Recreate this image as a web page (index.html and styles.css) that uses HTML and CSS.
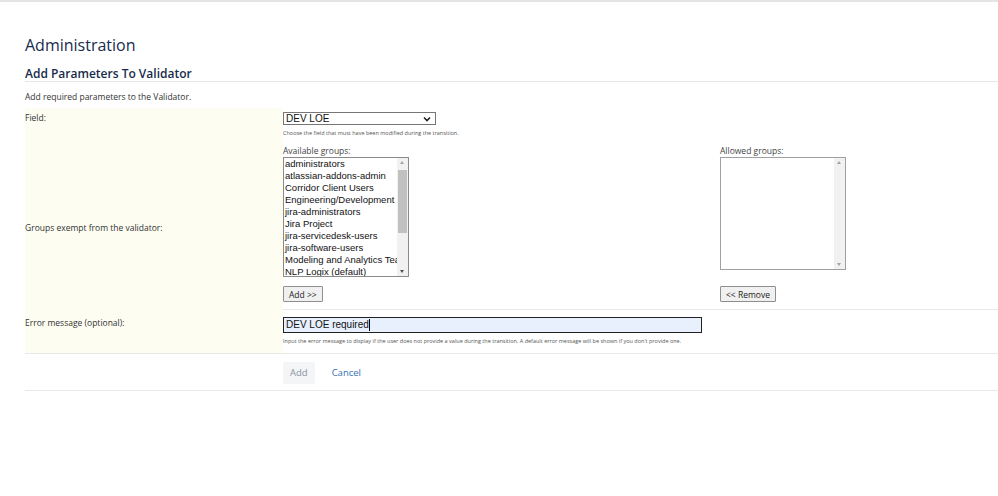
FILE: index.html
```html
<!DOCTYPE html>
<html lang="en">
<head>
  <meta charset="UTF-8" />
  <title>Add Parameters To Validator</title>
  <link rel="stylesheet" href="styles.css">
</head>
<body>
  <div class="topline"></div>

  <div class="page">
    <h1>Administration</h1>
    <h2>Add Parameters To Validator</h2>
    <p class="intro">Add required parameters to the Validator.</p>

    <table class="form">
      <colgroup>
        <col class="col-label">
        <col>
      </colgroup>
      <tr class="row-field">
        <td class="label">Field:</td>
        <td class="value">
          <div class="select">
            <span>DEV LOE</span>
            <svg class="chev" width="8" height="6" viewBox="0 0 8 6"><path d="M1 1.5 L4 4.5 L7 1.5" fill="none" stroke="#222" stroke-width="1.6"/></svg>
          </div>
          <div class="hint">Choose the field that must have been modified during the transition.</div>
        </td>
      </tr>
      <tr class="row-groups">
        <td class="label">Groups exempt from the validator:</td>
        <td class="value">
          <div class="groups">
            <div class="group-col">
              <div class="group-title">Available groups:</div>
              <div class="listbox available">
                <ul class="options">
                  <li>administrators</li>
                  <li>atlassian-addons-admin</li>
                  <li>Corridor Client Users</li>
                  <li>Engineering/Development Group</li>
                  <li>jira-administrators</li>
                  <li>Jira Project</li>
                  <li>jira-servicedesk-users</li>
                  <li>jira-software-users</li>
                  <li>Modeling and Analytics Team</li>
                  <li>NLP Logix (default)</li>
                </ul>
                <div class="scrollbar">
                  <span class="arrow up"></span>
                  <div class="track"><div class="thumb"></div></div>
                  <span class="arrow down"></span>
                </div>
              </div>
              <button class="btn">Add &gt;&gt;</button>
            </div>
            <div class="group-col">
              <div class="group-title">Allowed groups:</div>
              <div class="listbox allowed">
                <ul class="options"></ul>
                <div class="scrollbar">
                  <span class="arrow up light"></span>
                  <div class="track"></div>
                  <span class="arrow down light"></span>
                </div>
              </div>
              <button class="btn">&lt;&lt; Remove</button>
            </div>
          </div>
        </td>
      </tr>
      <tr class="row-error">
        <td class="label">Error message (optional):</td>
        <td class="value">
          <div class="text-input"><span>DEV LOE required</span><i class="caret"></i></div>
          <div class="hint">Input the error message to display if the user does not provide a value during the transition. A default error message will be shown if you don't provide one.</div>
        </td>
      </tr>
      <tr class="row-buttons">
        <td class="blank"></td>
        <td class="value">
          <div class="actions">
            <button class="submit">Add</button>
            <a class="cancel" href="#">Cancel</a>
          </div>
        </td>
      </tr>
    </table>
  </div>
</body>
</html>
```

FILE: styles.css
```css
* {
  box-sizing: border-box;
  margin: 0; padding: 0;
}
body {
  font-family: 'Open Sans', sans-serif;
  background: #fff;
  color: #333;
}

.topline {
  height: 2px;
  background: #e4e4e4;
}

.page {
  padding-left: 25px;
  padding-top: 33px;
}

h1 {
  font-size: 16px;
  font-weight: 500;
  color: #172b4d;
  line-height: 20px;
}

h2 {
  margin-top: 12px;
  font-size: 12px;
  font-weight: 600;
  color: #172b4d;
  line-height: 14px;
  padding-bottom: 0;
  border-bottom: 1px solid #e6e6e6;
}

.intro {
  font-size: 8.5px;
  line-height: 12px;
  margin-top: 9px;
  color: #333;
}

.form {
  border-collapse: collapse;
  table-layout: fixed;
  width: 100%;
  margin-top: 5px;
}
.col-label {
  width: 258px;
}
.form td {
  vertical-align: top;
}
.form .label {
  background: #fdfdf2;
  font-size: 8.5px;
  color: #333;
}

.row-field .label,
.row-field .value {
  padding-top: 4px;
}
.row-field .label {
  line-height: 12px;
}

.select {
  width: 153px;
  height: 13px;
  border: 1px solid #767676;
  display: flex;
  align-items: center;
  justify-content: space-between;
  padding: 0 4px 0 2px;
  font-family: 'Liberation Sans', Arial, sans-serif;
  font-size: 10px;
  color: #111;
}

.hint {
  font-size: 5.5px;
  color: #555;
  margin-top: 4px;
  line-height: 8px;
}

.row-groups .label {
  vertical-align: middle;
  padding-top: 8px;
}
.row-groups .value {
  padding-top: 7px;
  padding-bottom: 6px;
  border-bottom: 1px solid #e8e8e8;
}

.groups {
  display: flex;
}
.group-col {
  flex: 0 0 437px;
}
.group-col:last-child {
  flex: 1;
}
.group-title {
  font-size: 8.5px;
  line-height: 13px;
  color: #444;
}

.listbox {
  width: 126px;
  border: 1px solid #8a8a8a;
  display: flex;
  background: #fff;
}
.listbox.available {
  height: 120px;
}
.listbox.allowed {
  height: 113px;
  border-color: #a0a0a0;
}

.options {
  list-style: none;
  flex: 1;
  overflow: hidden;
  padding: 0 0 0 1px;
  font-family: 'Liberation Sans', Arial, sans-serif;
  font-size: 9.5px;
  line-height: 12px;
  color: #111;
  white-space: nowrap;
}

.scrollbar {
  width: 11px;
  background: #f1f1f1;
  display: flex;
  flex-direction: column;
}
.scrollbar .track {
  flex: 1;
  padding: 0 1px;
}
.scrollbar .thumb {
  height: 63px;
  margin-top: 3px;
  background: #c1c1c1;
}
.arrow {
  height: 9px;
  position: relative;
}
.arrow::after {
  content: "";
  position: absolute;
  left: 3px;
  top: 3px;
  border-left: 2.5px solid transparent;
  border-right: 2.5px solid transparent;
}
.arrow.up::after {
  border-bottom: 3px solid #a3a3a3;
}
.arrow.down::after {
  border-top: 3px solid #505050;
}
.arrow.light.down::after {
  border-top-color: #a3a3a3;
}

.btn {
  margin-top: 9px;
  height: 16px;
  padding: 0 5px;
  border: 1px solid #8f8f8f;
  background: #f0f0f0;
  border-radius: 1px;
  font-family: 'Open Sans', sans-serif;
  font-size: 8.5px;
  color: #222;
}
.group-col:last-child .btn {
  margin-top: 16px;
}

.row-error .label {
  padding-top: 8px;
  line-height: 12px;
  border-bottom: 1px solid #e8e8e8;
}
.row-error .value {
  padding-top: 7px;
  padding-bottom: 8px;
  border-bottom: 1px solid #e8e8e8;
}

.text-input {
  width: 419px;
  height: 16px;
  border: 1px solid #222;
  background: #e8f0fe;
  display: flex;
  align-items: center;
  padding-left: 2px;
  font-family: 'Liberation Sans', Arial, sans-serif;
  font-size: 10px;
  color: #111;
}
.caret {
  width: 1px;
  height: 12px;
  background: #000;
}

.row-buttons td {
  border-bottom: 1px solid #e8e8e8;
  padding: 8px 0 6px;
}
.actions {
  display: flex;
  align-items: center;
  gap: 17px;
}
.submit {
  height: 22px;
  padding: 0 7px;
  border: none;
  border-radius: 2px;
  background: #f4f5f7;
  color: #8993a4;
  font-family: 'Open Sans', sans-serif;
  font-size: 9.5px;
}
.cancel {
  color: #3572b0;
  text-decoration: none;
  font-size: 9.5px;
}
```
